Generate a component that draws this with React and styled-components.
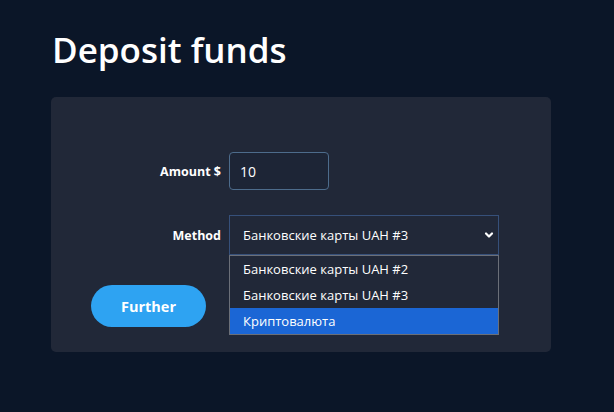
import styled, { createGlobalStyle } from "styled-components";

const GlobalStyle = createGlobalStyle`
  html, body {
    margin: 0;
    padding: 0;
    background-color: #0b1628;
  }
  body {
    font-family: "Open Sans", "Noto Sans", sans-serif;
    color: #fff;
  }
`;

const Page = styled.main`
  width: 100%;
  min-height: 412px;
  background-color: #0b1628;
  padding: 26px 51px 0;
  box-sizing: border-box;
`;

const Title = styled.h1`
  margin: 0 0 24px 1px;
  font-size: 35px;
  font-weight: 600;
  line-height: 47px;
  color: #ffffff;
`;

const Card = styled.section`
  width: 500px;
  box-sizing: border-box;
  background-color: #212838;
  border-radius: 5px;
  padding: 55px 40px 25px;
`;

const Form = styled.div`
  display: grid;
  grid-template-columns: 130px auto;
  column-gap: 8px;
  row-gap: 25px;
  align-items: center;
`;

const Label = styled.label`
  text-align: right;
  font-size: 12.5px;
  font-weight: 700;
  color: #ffffff;
`;

const Input = styled.div`
  width: 100px;
  height: 38px;
  box-sizing: border-box;
  border: 1px solid #4d6c8c;
  border-radius: 4px;
  background-color: #1d2536;
  padding: 0 10px;
  display: flex;
  align-items: center;
  font-size: 14px;
  color: #ffffff;
`;

const SelectWrap = styled.div`
  position: relative;
  width: 270px;
`;

const Select = styled.div`
  height: 40px;
  box-sizing: border-box;
  border: 1px solid #36507a;
  background-color: #212838;
  padding: 0 3px 0 13px;
  display: flex;
  align-items: center;
  justify-content: space-between;
  font-size: 13px;
  color: #ffffff;
`;

const Menu = styled.ul`
  position: absolute;
  top: 40px;
  left: 0;
  right: 0;
  margin: 0;
  padding: 0;
  list-style: none;
  border: 1px solid #6b6f78;
  background-color: #212838;
  z-index: 2;
`;

const Option = styled.li`
  height: 26px;
  padding: 0 13px;
  display: flex;
  align-items: center;
  font-size: 13px;
  color: #ffffff;
  background-color: ${(p) => (p.$active ? "#1b66d5" : "transparent")};
`;

const Button = styled.button`
  margin-top: 30px;
  width: 115px;
  height: 42px;
  border: none;
  border-radius: 21px;
  background-color: #2ea3f2;
  color: #ffffff;
  font-family: "Open Sans", sans-serif;
  font-size: 14.5px;
  font-weight: 700;
  cursor: pointer;
`;

function Chevron() {
  return (
    <svg width="12" height="12" viewBox="0 0 12 12">
      <path d="M3 4.5 L6 7.5 L9 4.5" fill="none" stroke="#fff" strokeWidth="2.2" strokeLinecap="round" strokeLinejoin="round" />
    </svg>
  );
}

const options = ["Банковские карты UAH #2", "Банковские карты UAH #3", "Криптовалюта"];

export default function App() {
  return (
    <>
      <GlobalStyle />
      <Page>
        <Title>Deposit funds</Title>
        <Card>
          <Form>
            <Label>Amount $</Label>
            <Input>10</Input>
            <Label>Method</Label>
            <SelectWrap>
              <Select>
                <span>Банковские карты UAH #3</span>
                <Chevron />
              </Select>
              <Menu>
                {options.map((o, i) => (
                  <Option key={o} $active={i === 2}>
                    {o}
                  </Option>
                ))}
              </Menu>
            </SelectWrap>
          </Form>
          <Button>Further</Button>
        </Card>
      </Page>
    </>
  );
}
